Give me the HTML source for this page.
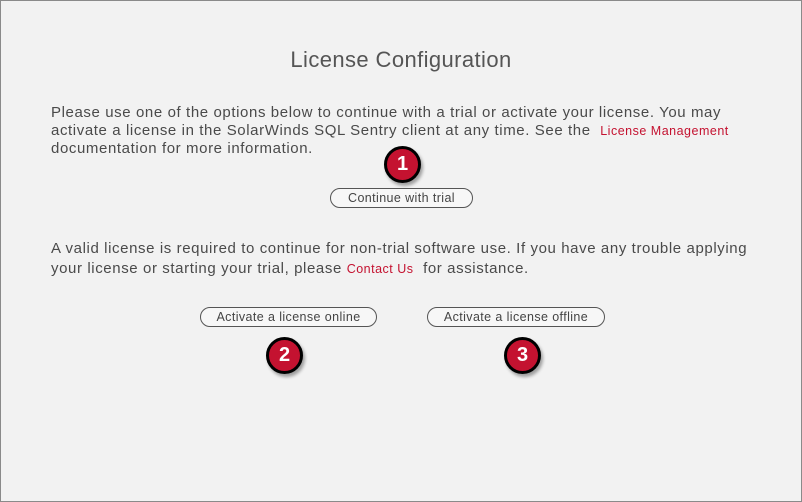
<!DOCTYPE html>
<html><head><style>
body{margin:0;width:802px;height:502px;overflow:hidden;background:#f2f2f2;font-family:"Liberation Sans",sans-serif;}
.frame{position:absolute;left:0;top:0;width:800px;height:500px;border:1px solid #8a8a8a;background:#f2f2f2;}
.t{position:absolute;white-space:nowrap;color:#4a4a4a;font-size:15px;line-height:18px;letter-spacing:0.6px;}
.l{color:#c41230;font-size:12.5px;letter-spacing:0.5px;}
.btn{position:absolute;height:18px;border:1px solid #555;border-radius:10px;background:#f7f7f7;color:#444;font-size:12.5px;line-height:18px;text-align:center;letter-spacing:0.4px;}
.b{position:absolute;width:31px;height:31px;border-radius:50%;background:#c41230;border:3px solid #000;box-shadow:2px 3px 3px rgba(0,0,0,.35);color:#fff;font-weight:bold;font-size:20px;line-height:31px;text-align:center;}
</style></head><body><div class="frame">
<div class="t" style="left:0;width:800px;text-align:center;top:45px;font-size:22px;line-height:28px;color:#555;letter-spacing:0.4px;">License Configuration</div>
<div class="t" style="left:50px;top:103px;">Please use one of the options below to continue with a trial or activate your license. You may</div>
<div class="t" style="left:50px;top:121px;">activate a license in the SolarWinds SQL Sentry client at any time. See the &nbsp;<span class="l">License Management</span></div>
<div class="t" style="left:50px;top:139px;">documentation for more information.</div>
<div class="b" style="left:383px;top:145px;">1</div>
<div class="btn" style="left:329px;top:187px;width:141px;">Continue with trial</div>
<div class="t" style="left:50px;top:239px;">A valid license is required to continue for non-trial software use. If you have any trouble applying</div>
<div class="t" style="left:50px;top:259px;">your license or starting your trial, please <span class="l">Contact Us</span>&nbsp; for assistance.</div>
<div class="btn" style="left:199px;top:306px;width:175px;">Activate a license online</div>
<div class="btn" style="left:426px;top:306px;width:176px;">Activate a license offline</div>
<div class="b" style="left:265px;top:336px;">2</div>
<div class="b" style="left:503px;top:336px;">3</div>
</div></body></html>
